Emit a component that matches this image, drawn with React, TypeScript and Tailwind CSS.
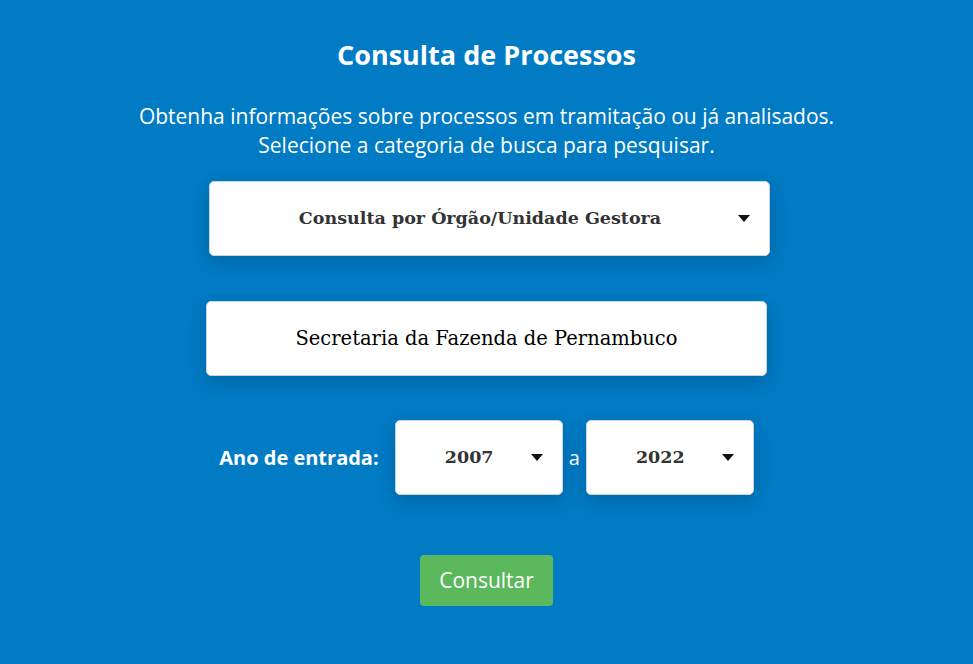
import React, { useState } from 'react';

const Caret = () => (
  <svg width="12" height="7" viewBox="0 0 12 7" className="shrink-0">
    <path d="M0 0 L12 0 L6 7 Z" fill="#111" />
  </svg>
);

const serif = { fontFamily: '"DejaVu Serif", serif' };

const App: React.FC = () => {
  const [categoria] = useState('Consulta por Órgão/Unidade Gestora');
  const [orgao, setOrgao] = useState('Secretaria da Fazenda de Pernambuco');
  const [anoInicio] = useState('2007');
  const [anoFim] = useState('2022');

  return (
    <div
      className="min-h-[664px] w-full bg-[#007bc4] text-white"
      style={{ fontFamily: '"Open Sans", sans-serif' }}
    >
      <div className="flex flex-col items-center pt-[37px]">
        <h1 className="text-[27px] font-bold leading-[36px]">Consulta de Processos</h1>

        <p className="mt-[29px] text-center text-[21px] leading-[29px]">
          Obtenha informações sobre processos em tramitação ou já analisados.
          <br />
          Selecione a categoria de busca para pesquisar.
        </p>

        {/* categoria */}
        <div className="ml-[6px] mt-[21px] flex h-[75px] w-[561px] items-center rounded-[5px] border border-[#c9d6e0] bg-white pl-[12px] pr-[19px] shadow-[0_6px_18px_rgba(0,40,80,0.25)]">
          <span className="flex-1 text-center text-[17.5px] font-bold text-[#333]" style={serif}>
            {categoria}
          </span>
          <Caret />
        </div>

        {/* orgao */}
        <input
          value={orgao}
          onChange={(e) => setOrgao(e.target.value)}
          className="mt-[45px] h-[75px] w-[561px] rounded-[5px] border border-[#c9d6e0] bg-white text-center text-[19.5px] text-black shadow-[0_6px_18px_rgba(0,40,80,0.25)] outline-none"
          style={serif}
        />

        {/* anos */}
        <div className="mt-[44px] flex items-center">
          <span className="mr-[16px] text-[20px] font-bold">Ano de entrada:</span>
          <div className="flex h-[75px] w-[168px] items-center rounded-[5px] border border-[#c9d6e0] bg-white pl-[12px] pr-[19px] shadow-[0_6px_18px_rgba(0,40,80,0.25)]">
            <span className="flex-1 text-center text-[17.5px] font-bold text-[#333]" style={serif}>
              {anoInicio}
            </span>
            <Caret />
          </div>
          <span className="mx-[6px] text-[20px]">a</span>
          <div className="flex h-[75px] w-[168px] items-center rounded-[5px] border border-[#c9d6e0] bg-white pl-[12px] pr-[19px] shadow-[0_6px_18px_rgba(0,40,80,0.25)]">
            <span className="flex-1 text-center text-[17.5px] font-bold text-[#333]" style={serif}>
              {anoFim}
            </span>
            <Caret />
          </div>
        </div>

        <button className="mt-[60px] h-[51px] w-[133px] rounded-[4px] bg-[#5cb85c] text-[21px] text-white">
          Consultar
        </button>
      </div>
    </div>
  );
};

export default App;
